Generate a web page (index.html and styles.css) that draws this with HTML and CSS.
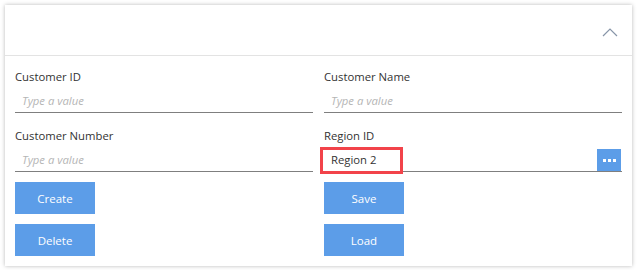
FILE: index.html
```html
<!DOCTYPE html>
<html>
<head>
<meta charset="utf-8">
<link rel="stylesheet" href="styles.css">
</head>
<body>
<div class="card">
  <div class="card-header">
    <svg class="chevron" width="16" height="10" viewBox="0 0 16 10"><path d="M1 9 L8 2 L15 9" fill="none" stroke="#8795a8" stroke-width="1.2"/></svg>
  </div>
  <div class="card-body">
    <div class="field">
      <label class="label">Customer ID</label>
      <div class="input"><span class="placeholder">Type a value</span></div>
    </div>
    <div class="field">
      <label class="label">Customer Name</label>
      <div class="input"><span class="placeholder">Type a value</span></div>
    </div>
    <div class="field">
      <label class="label">Customer Number</label>
      <div class="input"><span class="placeholder">Type a value</span></div>
    </div>
    <div class="field">
      <label class="label">Region ID</label>
      <div class="input with-btn">
        <span class="value">Region 2</span>
        <span class="highlight"></span>
        <button class="ellipsis"><i></i><i></i><i></i></button>
      </div>
    </div>
    <div class="btn-cell"><button class="btn">Create</button></div>
    <div class="btn-cell"><button class="btn">Save</button></div>
    <div class="btn-cell"><button class="btn">Delete</button></div>
    <div class="btn-cell"><button class="btn">Load</button></div>
  </div>
</div>
</body>
</html>
```
FILE: styles.css
```css
html, body {
  margin: 0;
  padding: 0;
  background: #ffffff;
}
body {
  padding: 5px;
  font-family: "Open Sans", "Noto Sans", sans-serif;
  font-size: 11.3px;
  color: #333333;
}
.card {
  background: #ffffff;
  height: 261px;
  box-sizing: border-box;
  box-shadow: 0 0 4px rgba(0, 0, 0, 0.28);
}
.card-header {
  height: 50px;
  border-bottom: 1px solid #e3e3e3;
  display: flex;
  align-items: center;
  justify-content: flex-end;
  padding-right: 14px;
  box-sizing: content-box;
}
.chevron {
  display: block;
  margin-top: 4px;
}
.card-body {
  display: grid;
  grid-template-columns: 1fr 1fr;
  column-gap: 11px;
  row-gap: 10px;
  padding: 8px 10px 10px 10px;
}
.field {
  display: flex;
  flex-direction: column;
}
.label {
  display: block;
  padding-top: 4px;
  line-height: 18px;
  height: 18px;
  margin-bottom: 4px;
  color: #333333;
}
.input {
  position: relative;
  height: 22px;
  border-bottom: 1px solid #7f7f7f;
  padding-left: 7px;
  line-height: 22px;
}
.placeholder {
  font-style: italic;
  color: #b5b5b5;
}
.value {
  color: #333333;
}
.highlight {
  position: absolute;
  left: -4px;
  top: -2px;
  width: 83px;
  height: 27px;
  box-sizing: border-box;
  border: 3px solid #f2434a;
}
.ellipsis {
  position: absolute;
  right: 1px;
  top: 0;
  width: 24px;
  height: 22px;
  border: 0;
  padding: 0;
  background: #5c9de8;
  display: flex;
  align-items: center;
  justify-content: center;
  gap: 2px;
}
.ellipsis i {
  display: block;
  width: 3px;
  height: 3px;
  background: #ffffff;
  margin-top: 1px;
}
.btn {
  width: 80px;
  height: 32px;
  border: 0;
  padding: 0;
  background: #5c9de8;
  color: #ffffff;
  font-family: "Open Sans", "Noto Sans", sans-serif;
  font-size: 11.5px;
}
```
